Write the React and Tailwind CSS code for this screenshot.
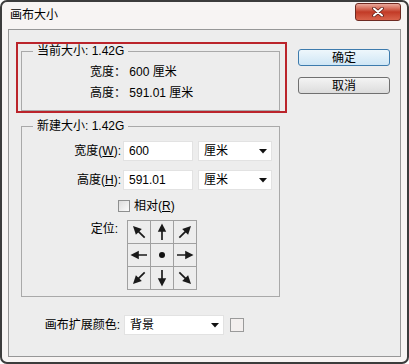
import React from "react";

function Arrow({ deg }) {
  return (
    <svg width="22" height="22" viewBox="0 0 22 22">
      <g transform={`rotate(${deg} 11 11)`}>
        <line x1="11" y1="19" x2="11" y2="9" stroke="#1a1a1a" strokeWidth="1.7" />
        <polygon points="11,2.5 6.8,10.8 15.2,10.8" fill="#1a1a1a" />
      </g>
    </svg>
  );
}

function Dot() {
  return (
    <svg width="22" height="22" viewBox="0 0 22 22">
      <circle cx="11" cy="11" r="3" fill="#111" />
    </svg>
  );
}

function DropArrow() {
  return (
    <svg width="8" height="5" viewBox="0 0 8 5">
      <polygon points="0,0 8,0 4,4.5" fill="#111" />
    </svg>
  );
}

function Select({ text, w }) {
  return (
    <div className={`${w} h-[20px] bg-white border border-[#e2e2e2] flex items-center justify-between pl-[5px] pr-[4px]`}>
      <span className="leading-[14px]">{text}</span>
      <DropArrow />
    </div>
  );
}

export default function App() {
  const cells = [
    <Arrow key="nw" deg={315} />,
    <Arrow key="n" deg={0} />,
    <Arrow key="ne" deg={45} />,
    <Arrow key="w" deg={270} />,
    <Dot key="c" />,
    <Arrow key="e" deg={90} />,
    <Arrow key="sw" deg={225} />,
    <Arrow key="s" deg={180} />,
    <Arrow key="se" deg={135} />,
  ];
  return (
    <div className="w-[409px] h-[364px] bg-[#f7f4f3] border-2 border-[#3c3c3c] rounded-[7px] flex flex-col font-['Liberation_Sans','Noto_Sans_CJK_SC',sans-serif] text-[12px] text-black overflow-hidden">
      {/* title bar */}
      <div className="h-[27px] flex justify-between items-start">
        <div className="pl-[8px] pt-[6px] leading-[14px] text-[12px]">画布大小</div>
        <div className="mt-[1px] mr-[6px] w-[46px] h-[18px] rounded-[3px] border border-[#6e2a22] bg-linear-to-b from-[#e9a89b] via-[#c23a26] to-[#d9634b] flex items-center justify-center">
          <svg width="12" height="10" viewBox="0 0 12 10">
            <path d="M2 1.5 L10 8.5 M10 1.5 L2 8.5" stroke="#5a1f18" strokeWidth="3.6" strokeLinecap="round" />
            <path d="M2 1.5 L10 8.5 M10 1.5 L2 8.5" stroke="#ffffff" strokeWidth="2" strokeLinecap="round" />
          </svg>
        </div>
      </div>

      {/* client panel */}
      <div className="mx-[6px] h-[328px] border border-[#979797] bg-[#ededed] flex flex-col">
        <div className="flex">
          {/* left column */}
          <div className="flex flex-col">
            <div className="mt-[12px] ml-[7px] w-[271px] border-2 border-[#bb242b]">
              <fieldset className="ml-[3px] w-[259px] border border-[#a9a9a9] pt-[4px] pb-[6px]">
                <legend className="ml-[11px] px-[4px] leading-[14px]">当前大小: 1.42G</legend>
                <div className="pl-[68px] h-[21px] leading-[21px]">宽度：&nbsp;600 厘米</div>
                <div className="pl-[68px] h-[21px] leading-[21px]">高度：&nbsp;591.01 厘米</div>
              </fieldset>
            </div>

            <fieldset className="mt-[6px] ml-[12px] w-[259px] border border-[#a9a9a9] pt-[8px] pb-[6px]">
              <legend className="ml-[11px] px-[4px] leading-[14px]">新建大小: 1.42G</legend>
              <div className="flex items-center h-[20px]">
                <span className="w-[99px] text-right leading-[14px]">宽度(<span className="underline">W</span>):</span>
                <div className="ml-[2px] w-[70px] h-[20px] bg-white border border-[#e2e2e2] pl-[5px] leading-[18px]">600</div>
                <div className="ml-[5px]"><Select text="厘米" w="w-[74px]" /></div>
              </div>
              <div className="flex items-center h-[20px] mt-[9px]">
                <span className="w-[99px] text-right leading-[14px]">高度(<span className="underline">H</span>):</span>
                <div className="ml-[2px] w-[70px] h-[20px] bg-white border border-[#e2e2e2] pl-[5px] leading-[18px]">591.01</div>
                <div className="ml-[5px]"><Select text="厘米" w="w-[74px]" /></div>
              </div>
              <div className="flex items-center h-[13px] mt-[9px] pl-[96px]">
                <div className="w-[12px] h-[12px] border border-[#8e8f8f] bg-linear-to-br from-[#dcdcdc] to-[#fbfbfb]" />
                <span className="ml-[4px] leading-[14px]">相对(<span className="underline">R</span>)</span>
              </div>
              <div className="flex items-start mt-[8px]">
                <span className="w-[96px] text-right mt-[2px] leading-[14px]">定位:</span>
                <div className="ml-[9px] grid grid-cols-3 border-l border-t border-[#a0a0a0] w-[70px]">
                  {cells.map((c, i) => (
                    <div key={i} className="w-[23px] h-[23px] border-r border-b border-[#a0a0a0] flex items-center justify-center">
                      {c}
                    </div>
                  ))}
                </div>
              </div>
            </fieldset>
          </div>

          {/* buttons */}
          <div className="ml-[11px] mt-[19px] flex flex-col gap-[11px]">
            <div className="w-[92px] h-[17px] rounded-[3px] border border-[#3d7bad] bg-linear-to-b from-[#eef7fc] to-[#cfe6f5] flex items-center justify-center leading-[14px]">确定</div>
            <div className="w-[92px] h-[17px] rounded-[3px] border border-[#707070] bg-linear-to-b from-[#f4f4f4] to-[#dcdcdc] flex items-center justify-center leading-[14px]">取消</div>
          </div>
        </div>

        {/* bottom row */}
        <div className="mt-[18px] flex items-center">
          <span className="w-[115px] text-right pr-[4px] leading-[14px]">画布扩展颜色:</span>
          <Select text="背景" w="w-[100px]" />
          <div className="ml-[6px] w-[14px] h-[14px] border border-[#9a9a9a] bg-[#f3efee]" />
        </div>
      </div>
    </div>
  );
}
